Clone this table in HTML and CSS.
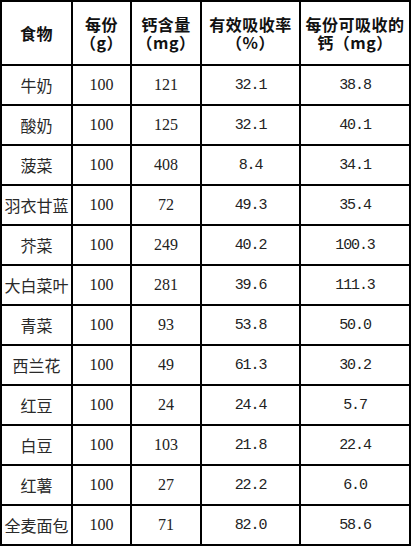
FILE: index.html
```html
<!DOCTYPE html>
<html lang="zh">
<head>
<meta charset="utf-8">
<link rel="stylesheet" href="styles.css">
</head>
<body>
<table class="calcium">
  <colgroup>
    <col class="c1"><col class="c2"><col class="c3"><col class="c4"><col class="c5">
  </colgroup>
  <thead>
    <tr>
      <th>食物</th>
      <th><span class="hline">每份</span><span class="hline">（g）</span></th>
      <th><span class="hline">钙含量</span><span class="hline">（mg）</span></th>
      <th><span class="hline">有效吸收率</span><span class="hline">（%）</span></th>
      <th><span class="hline">每份可吸收的</span><span class="hline">钙（mg）</span></th>
    </tr>
  </thead>
  <tbody>
    <tr><td class="name">牛奶</td><td class="num">100</td><td class="num">121</td><td class="dec">32.1</td><td class="dec">38.8</td></tr>
    <tr><td class="name">酸奶</td><td class="num">100</td><td class="num">125</td><td class="dec">32.1</td><td class="dec">40.1</td></tr>
    <tr><td class="name">菠菜</td><td class="num">100</td><td class="num">408</td><td class="dec">8.4</td><td class="dec">34.1</td></tr>
    <tr><td class="name">羽衣甘蓝</td><td class="num">100</td><td class="num">72</td><td class="dec">49.3</td><td class="dec">35.4</td></tr>
    <tr><td class="name">芥菜</td><td class="num">100</td><td class="num">249</td><td class="dec">40.2</td><td class="dec">100.3</td></tr>
    <tr><td class="name">大白菜叶</td><td class="num">100</td><td class="num">281</td><td class="dec">39.6</td><td class="dec">111.3</td></tr>
    <tr><td class="name">青菜</td><td class="num">100</td><td class="num">93</td><td class="dec">53.8</td><td class="dec">50.0</td></tr>
    <tr><td class="name">西兰花</td><td class="num">100</td><td class="num">49</td><td class="dec">61.3</td><td class="dec">30.2</td></tr>
    <tr><td class="name">红豆</td><td class="num">100</td><td class="num">24</td><td class="dec">24.4</td><td class="dec">5.7</td></tr>
    <tr><td class="name">白豆</td><td class="num">100</td><td class="num">103</td><td class="dec">21.8</td><td class="dec">22.4</td></tr>
    <tr><td class="name">红薯</td><td class="num">100</td><td class="num">27</td><td class="dec">22.2</td><td class="dec">6.0</td></tr>
    <tr><td class="name">全麦面包</td><td class="num">100</td><td class="num">71</td><td class="dec">82.0</td><td class="dec">58.6</td></tr>
  </tbody>
</table>
</body>
</html>
```
FILE: styles.css
```css
html, body {
  margin: 0;
  padding: 0;
  background: #ffffff;
}

.calcium {
  border-collapse: collapse;
  table-layout: fixed;
  width: 409px;
  color: #222222;
  font-family: "Noto Sans CJK SC", sans-serif;
  font-size: 16px;
}

.c1 { width: 71px; }
.c2 { width: 59px; }
.c3 { width: 70px; }
.c4 { width: 99px; }
.c5 { width: 110px; }

.calcium th,
.calcium td {
  border: 2px solid #000000;
  padding: 0;
  text-align: center;
  vertical-align: middle;
}

.calcium thead tr {
  height: 64px;
}

.calcium tbody tr {
  height: 40px;
}

.calcium th {
  font-weight: 700;
  color: #111111;
  line-height: 18px;
  letter-spacing: 0.5px;
}

.hline {
  display: block;
  height: 18px;
  line-height: 18px;
  white-space: nowrap;
}

.calcium .name {
  font-weight: 400;
  color: #2a2a2a;
  line-height: 20px;
  white-space: nowrap;
}

.calcium .num {
  font-family: "Liberation Serif", serif;
  font-size: 16px;
}

.calcium .dec {
  font-family: "Liberation Mono", monospace;
  font-size: 15px;
  letter-spacing: -1.1px;
}
```
